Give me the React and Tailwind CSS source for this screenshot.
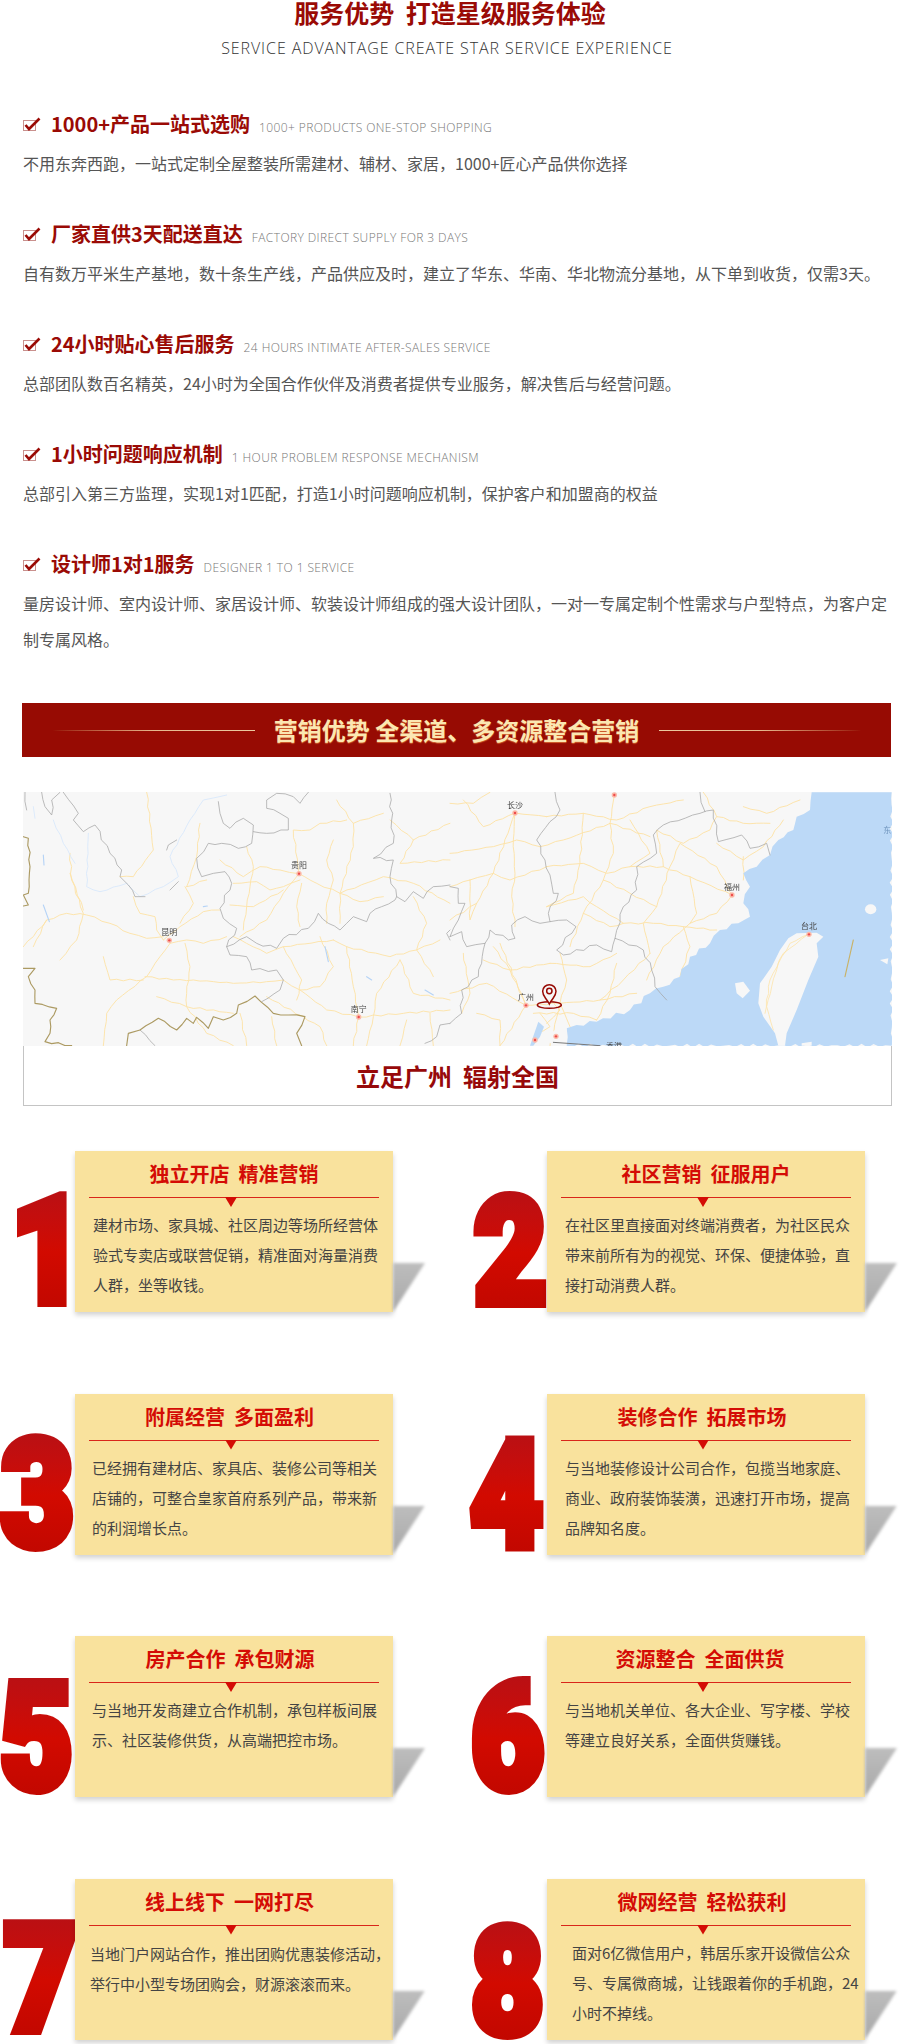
const features = [
  { title: '1000+产品一站式选购', en: '1000+ PRODUCTS ONE-STOP SHOPPING', text: '不用东奔西跑，一站式定制全屋整装所需建材、辅材、家居，1000+匠心产品供你选择' },
  { title: '厂家直供3天配送直达', en: 'FACTORY DIRECT SUPPLY FOR 3 DAYS', text: '自有数万平米生产基地，数十条生产线，产品供应及时，建立了华东、华南、华北物流分基地，从下单到收货，仅需3天。' },
  { title: '24小时贴心售后服务', en: '24 HOURS INTIMATE AFTER-SALES SERVICE', text: '总部团队数百名精英，24小时为全国合作伙伴及消费者提供专业服务，解决售后与经营问题。' },
  { title: '1小时问题响应机制', en: '1 HOUR PROBLEM RESPONSE MECHANISM', text: '总部引入第三方监理，实现1对1匹配，打造1小时问题响应机制，保护客户和加盟商的权益' },
  { title: '设计师1对1服务', en: 'DESIGNER 1 TO 1 SERVICE', text: '量房设计师、室内设计师、家居设计师、软装设计师组成的强大设计团队，一对一专属定制个性需求与户型特点，为客户定制专属风格。' },
];

const cards = [
  { n: '1', title: '独立开店\u00a0\u00a0精准营销', titleCls: 'pr-0', bodyCls: 'pl-[18px]', numCls: '-mr-[16px] -mb-[6px]', lines: ['建材市场、家具城、社区周边等场所经营体', '验式专卖店或联营促销，精准面对海量消费', '人群，坐等收钱。'] },
  { n: '2', title: '社区营销\u00a0\u00a0征服用户', titleCls: 'pr-0', bodyCls: 'pl-[18px]', numCls: '-mr-[7px] -mb-[7px]', lines: ['在社区里直接面对终端消费者，为社区民众', '带来前所有为的视觉、环保、便捷体验，直', '接打动消费人群。'] },
  { n: '3', title: '附属经营\u00a0\u00a0多面盈利', titleCls: 'pr-[9px]', bodyCls: 'pl-[17px]', numCls: '-mr-[6px] -mb-[7px]', lines: ['已经拥有建材店、家具店、装修公司等相关', '店铺的，可整合皇家首府系列产品，带来新', '的利润增长点。'] },
  { n: '4', title: '装修合作\u00a0\u00a0拓展市场', titleCls: 'pr-[8px]', bodyCls: 'pl-[18px]', numCls: '-mr-[3px] -mb-[7px]', lines: ['与当地装修设计公司合作，包揽当地家庭、', '商业、政府装饰装潢，迅速打开市场，提高', '品牌知名度。'] },
  { n: '5', title: '房产合作\u00a0\u00a0承包财源', titleCls: 'pr-[8px]', bodyCls: 'pl-[17px]', numCls: '-mr-[5px] -mb-[8px]', lines: ['与当地开发商建立合作机制，承包样板间展', '示、社区装修供货，从高端把控市场。'] },
  { n: '6', title: '资源整合\u00a0\u00a0全面供货', titleCls: 'pr-[12px]', bodyCls: 'pl-[18px]', numCls: '-mr-[4px] -mb-[8px]', lines: ['与当地机关单位、各大企业、写字楼、学校', '等建立良好关系，全面供货赚钱。'] },
  { n: '7', title: '线上线下\u00a0\u00a0一网打尽', titleCls: 'pr-[9px]', bodyCls: 'pl-[15px] pt-[1px]', numCls: '-mr-[9px] -mb-[6px]', lines: ['当地门户网站合作，推出团购优惠装修活动，', '举行中小型专场团购会，财源滚滚而来。'] },
  { n: '8', title: '微网经营\u00a0\u00a0轻松获利', titleCls: 'pr-[8px]', bodyCls: 'pl-[25px]', numCls: '-mr-[4px] -mb-[10px]', lines: ['面对6亿微信用户，韩居乐家开设微信公众', '号、专属微商城，让钱跟着你的手机跑，24', '小时不掉线。'] },
];

const grayLeft = [
  '125,37 135,80 155,105 155,60 180,37',
  '190,37 235,100 220,120 250,155 285,135 330,220 365,270 360,290 385,315 405,350 435,350',
  '535,305 510,330',
  '530,180 505,195 500,210',
  '655,65 660,100 670,130 690,145 730,115 760,135 755,190 715,205 665,190 625,190 590,235 605,290 640,280 675,275 695,310 660,385 670,415 710,445 680,500 690,525 740,530 755,570 830,570 850,600 840,630 785,665',
  '760,155 800,160 865,150 865,115 840,100 800,85 800,60 830,40 880,50 900,70 925,37',
  '680,500 740,470 770,490 830,505 850,475 925,445 955,400 985,430 1020,450 1060,410 1100,425 1110,400 1145,380 1185,360 1190,350 1170,290 1180,240 1120,235 1180,190 1175,120 1170,40',
  '1190,350 1215,365 1240,335 1270,355 1300,320 1350,315',
  '1350,450 1340,460 1350,480',
  '1350,730 1320,735 1310,770 1275,790',
  '75,37 80,90',
  '420,750 465,797',
];

const oliveLeft = [
  '70,170 85,175 90,260 85,340 70,345 85,375 70,378',
  '70,565 105,565 85,590 105,630 105,670 170,685 150,720 150,760 135,785 215,797',
  '380,797 385,760 420,750 475,715 530,750 560,715 580,730 590,712 625,745 640,710 670,720 710,700 715,675 765,648 820,700 865,705 915,710 890,760 905,797',
];

const roadsLeft = [
  '70,500 100,470 140,420 200,400 260,405 330,430 390,460 440,475 490,470',
  '400,350 420,400 465,410 470,450 490,480',
  '490,480 540,440 610,395 660,390',
  '510,490 560,480 610,490 680,470',
  '510,490 480,530 440,590 350,660 320,700 310,797',
  '555,490 570,560 560,640 560,680 620,760 700,797',
  '435,590 520,600 580,600 700,610 800,605 850,600',
  '210,280 250,390',
  '440,37 460,210 400,290 360,290',
  '600,130 590,230 560,320',
  '555,320 580,370 540,430',
  '660,240 730,290 780,260 840,270 897,281 950,310 1020,340 1080,365 1150,350',
  '897,281 880,150 930,150 960,130 1040,120',
  '897,281 850,340 800,420 720,470',
  '690,375 760,380 850,330',
  '905,310 890,380 900,440',
  '740,200 760,260 740,380 730,450',
  '1000,180 980,240 1000,300 980,370 980,430',
  '1060,130 1060,200 1020,340 1020,430',
  '1040,500 1060,620 1076,711 1060,797',
  '1076,711 1210,700 1350,690',
  '1076,711 980,690 900,630 850,600',
  '800,650 960,740 980,797',
  '1000,480 1040,500 1170,530 1250,510 1320,480',
  '1200,540 1130,640 1120,710 1100,797',
  '1200,540 1240,640 1350,660',
  '1170,120 1240,180 1350,130',
  '1240,180 1200,250 1350,240',
  '700,310 770,305 810,330 850,320 900,300',
  '1010,60 1060,130 1150,100',
  '1020,340 1150,290 1240,310 1350,370',
  '1240,350 1280,430 1250,510 1300,590',
  '960,470 1000,560 960,620 900,630',
  '850,500 905,600 890,660',
  '700,470 800,520 850,500 1000,480',
  '210,220 215,300 250,400 230,480 180,540',
  '310,530 330,600 430,600',
  '470,650 560,680 700,700',
  '720,700 740,797',
  '815,710 830,797',
  '1220,720 1200,797',
  '1290,700 1300,797',
  '140,420 100,500',
  '620,300 560,320',
];

const grayRight = [
  '315,37 330,90 300,125 260,180 285,240 300,285 310,340 325,340 295,400 300,425 350,420 378,440 320,510 340,525 440,495 485,515 495,475 580,510 605,570 615,620 650,660',
  '300,425 270,430 225,410 185,435 195,475 175,480 120,450 105,490 50,500 35,455 0,470',
  '0,320 25,325 25,370 45,370 25,420 0,470',
  '105,490 85,590 35,630 35,700 0,730',
  '495,475 520,380 560,330 560,260 620,220 610,165 640,135 750,100 790,90 805,185 875,165 900,205 950,190 960,225',
  '750,37 765,95',
];

const roadsRight = [
  '195,99 190,180 195,280 185,350 195,440',
  '40,60 100,140 195,99 290,110',
  '0,220 130,200 200,180 270,200',
  '0,70 70,70 120,37',
  '195,99 130,280 80,370 0,420',
  '290,260 400,250 470,280 540,260 640,260 720,290 846,345',
  '493,45 480,130 490,220 460,300 400,400 360,500',
  '290,380 400,350 440,380 520,430 610,430 700,440 800,450',
  '846,345 800,400 720,430 640,500 590,600',
  '846,345 800,260 690,190 660,260 620,380 580,430 600,520',
  '150,490 228,676 330,670 450,660 560,640',
  '228,676 180,570 130,500',
  '0,640 110,610 228,676',
  '228,676 150,797',
  '300,550 420,560 500,520',
  '330,670 300,797',
  '330,670 360,740',
  '250,700 370,700 440,720',
  '500,550 480,640 440,720',
  '700,440 720,500 690,590',
  '880,230 880,300',
  '1000,120 940,200 880,240 800,190',
  '880,80 950,100 1050,60',
  '760,37 800,110 880,130 960,130',
  '290,110 400,100 500,120 600,80 700,60',
  '270,200 340,180 480,130 600,170',
  '400,100 390,250 370,340 290,380',
  '540,120 600,220 540,260',
  '640,260 620,150 700,190 780,150 800,110',
  '60,300 130,280 180,300 290,260',
  '60,300 60,420 80,370',
  '0,320 60,300',
  '460,300 540,340 620,380',
  '720,290 740,400 720,430',
  '400,400 480,440 520,430',
  '100,540 180,570 300,550',
  '330,520 350,600 330,670',
  '40,520 60,640 35,700',
  '80,700 150,720 150,797',
  '450,660 520,600 600,520',
  '270,700 300,740 260,760',
  '290,640 330,690 290,730',
];

const citiesLeft = [
  { name: '贵阳', x: 897, y: 281 },
  { name: '昆明', x: 508, y: 481 },
  { name: '南宁', x: 1076, y: 711 },
];

const citiesRight = [
  { name: '长沙', x: 195, y: 99 },
  { name: '福州', x: 846, y: 345 },
  { name: '台北', x: 1077, y: 463 },
  { name: '广州', x: 228, y: 676 },
  { name: '', x: 493, y: 45 },
  { name: '', x: 255, y: 780 },
  { name: '', x: 318, y: 769 },
];

// break long segments up so borders and coast look hand-drawn rather than straight
const wiggle = (pts, amp, step = 20) => {
  const nums = pts.trim().split(/\s+/).map((p) => p.split(',').map(Number));
  const out = [];
  nums.forEach(([x, y], i) => {
    out.push(`${x},${y}`);
    const next = nums[i + 1];
    if (!next) return;
    const dx = next[0] - x;
    const dy = next[1] - y;
    const len = Math.hypot(dx, dy);
    const count = Math.floor(len / step);
    for (let k = 1; k < count; k++) {
      const t = k / count;
      const off = Math.sin((x + y) * 12.9 + k * 78.2) * amp;
      out.push(`${(x + dx * t - (dy / len) * off).toFixed(1)},${(y + dy * t + (dx / len) * off).toFixed(1)}`);
    }
  });
  return out.join(' ');
};

const City = ({ name, x, y }) => (
  <g>
    <circle cx={x} cy={y} r="8" fill="#fbb9a8" />
    <circle cx={x} cy={y} r="3.5" fill="#ee4b4b" />
    {name && (
      <text x={x} y={y - 16} fontSize="24" textAnchor="middle" fill="#444" fontFamily="'Noto Sans CJK SC', sans-serif">
        {name}
      </text>
    )}
  </g>
);

const Lines = ({ items, color, width, amp = 0 }) => (
  <g fill="none" stroke={color} strokeWidth={width} strokeLinejoin="round" strokeLinecap="round">
    {items.map((pts) => (
      <polyline key={pts} points={amp ? wiggle(pts, amp) : pts} />
    ))}
  </g>
);

const MapArt = () => (
  <svg viewBox="0 0 869 254" className="block w-[869px] h-[254px] blur-[0.3px]">
    <rect width="869" height="254" fill="#f7f7f7" />
    <g transform="translate(-23,-12) scale(0.33333)">
      <Lines items={roadsLeft} color="#fde3a8" width="2.8" amp={2.5} />
      <Lines items={['160,120 190,190 225,250', '265,160 260,320 300,335 380,310 420,350 490,320 535,290 510,230 570,120 610,60 680,45', '100,80 105,115']} color="#d8e8fb" width="2.6" amp={2} />
      <Lines items={['130,375 148,425', '130,225 132,255', '975,500 985,545', '610,380 622,378', '1275,630 1300,645', '1100,590 1115,600']} color="#b5d3f6" width="3.4" />
      <Lines items={grayLeft} color="#a3a3a3" width="2.2" amp={4.5} />
      <Lines items={oliveLeft} color="#ac9a62" width="3.4" amp={3} />
      {citiesLeft.map((c) => (
        <City key={c.name} {...c} />
      ))}
    </g>
    <g transform="translate(427,-12) scale(0.33333)">
      <Lines items={roadsRight} color="#fde2a6" width="2.8" amp={2.5} />
      <polygon
        fill="#bcd9f7"
        points={wiggle('1085,37 1080,90 1040,110 1030,150 985,180 960,225 920,260 880,280 900,320 880,370 900,410 865,430 810,450 780,490 720,530 690,590 640,620 600,640 540,690 440,725 380,735 350,745 350,797 1325,797 1325,37', 6, 18)}
      />
      <polygon fill="#bcd9f7" points="265,725 282,740 270,770 250,797 240,797" />
      <polygon
        fill="#f7f7f7"
        points="1040,460 1100,458 1120,470 1100,490 1105,530 1075,600 1040,690 1010,760 1005,797 985,797 975,760 940,710 925,670 930,610 965,560 990,510 1015,475"
      />
      <ellipse cx="1262" cy="388" rx="17" ry="15" fill="#f7f7f7" />
      <polygon fill="#f7f7f7" points="855,610 880,605 900,632 878,655 860,640" />
      <polygon fill="#f7f7f7" points="1290,540 1315,535 1312,553" />
      <polygon fill="#f7f7f7" points="1055,790 1085,785 1085,797 1055,797" />
      <polygon fill="#f7f7f7" points="320,745 350,745 350,785 300,790 288,775" />
      <Lines items={['1075,463 1020,490 985,550 965,620 950,680 970,750', '1075,463 1000,520 960,600 945,700']} color="#fce3a9" width="2.4" amp={2} />
      <Lines items={['1210,480 1185,590']} color="#c9b266" width="3.4" />
      <Lines items={grayRight} color="#a3a3a3" width="2.2" amp={4.5} />
      <Lines items={['310,787 450,797']} color="#777" width="3" />
      {citiesRight.map((c) => (
        <City key={`${c.x}`} {...c} />
      ))}
      <text x="1312" y="158" fontSize="24" textAnchor="middle" fill="#6f94bd" fontFamily="'Noto Sans CJK SC', sans-serif">东</text>
      <text x="492" y="806" fontSize="24" textAnchor="middle" fill="#444" fontFamily="'Noto Sans CJK SC', sans-serif">香港</text>
      <g fill="none" stroke="#970a05" strokeWidth="4.5">
        <ellipse cx="298" cy="675" rx="36" ry="10" />
        <path d="M298 672 C288 652 278 650 278 634 a20 20 0 0 1 40 0 C318 650 308 652 298 672 Z" fill="#f7f7f7" />
        <circle cx="298" cy="633" r="8" />
      </g>
    </g>
  </svg>
);

const CheckIcon = () => (
  <svg viewBox="0 0 18 14" className="w-[18px] h-[14px] shrink-0">
    <rect x="0.5" y="3.5" width="12" height="10" fill="none" stroke="#c9908d" strokeWidth="1" />
    <path d="M2.5 8 L6 12 L16.5 1.5" fill="none" stroke="#9a0a05" strokeWidth="2.6" />
  </svg>
);

const Card = ({ card }) => (
  <div className="relative w-[318px] h-[161px] shrink-0 bg-[#f9e29d] shadow-[0_3px_5px_rgba(0,0,0,0.18)]">
    {/* cast shadow on the right */}
    <div className="absolute left-full bottom-0 blur-[1.5px]">
      <div className="w-[32px] h-[49px] bg-gradient-to-b from-[#bdbdbd] to-[#a8a8a8] [clip-path:polygon(0_0,100%_0,0_100%)]" />
    </div>
    <div className={`h-[46px] flex items-center justify-center text-[20px] font-bold text-[#d40c05] ${card.titleCls}`}>
      {card.title}
    </div>
    <div className="relative mx-[14px] h-[1px] bg-[#d9261a]">
      <div className="absolute left-[136px] top-0 w-[12px] h-[10px] bg-[#d40c05] [clip-path:polygon(0_0,100%_0,50%_100%)]" />
    </div>
    <div className={`mt-[12px] text-[15px] leading-[30px] text-[#444] ${card.bodyCls}`}>
      {card.lines.map((line) => (
        <div key={line} className="whitespace-nowrap">{line}</div>
      ))}
    </div>
  </div>
);

const BigNumber = ({ n, className }) => (
  <span
    className={`inline-block origin-right scale-x-[0.85] px-[8px] py-[6px] text-[148px] leading-[120px] font-black text-transparent bg-clip-text bg-gradient-to-b from-[#b81014] via-[#d20a00] to-[#bf0700] [-webkit-text-stroke:10px_transparent] font-['Roboto',sans-serif] ${className}`}
  >
    {n}
  </span>
);

export default function App() {
  return (
    <div className="relative w-[900px] h-[2044px] overflow-hidden bg-white font-['Noto_Sans_CJK_SC',sans-serif]">
      {/* Header */}
      <h1 className="text-center text-[25px] leading-6 font-bold text-[#9a0a05]">服务优势&nbsp;&nbsp;打造星级服务体验</h1>
      <p className="mt-[14px] pr-[6px] text-center text-[16px] leading-5 tracking-[0.9px] text-[#333] font-['Open_Sans',sans-serif] font-light">
        SERVICE ADVANTAGE CREATE STAR SERVICE EXPERIENCE
      </p>

      {/* Features */}
      <div className="mt-[52px] pl-[23px] pr-[7px]">
        {features.map((f) => (
          <div key={f.en} className="mb-[39px]">
            <div className="flex items-center h-7">
              <CheckIcon />
              <div className="ml-[10px] flex items-baseline">
                <span className="text-[20px] font-bold text-[#9a0a05] leading-7">{f.title}</span>
                <span className="ml-[9px] text-[12px] tracking-[0.4px] text-[#777] font-['Open_Sans',sans-serif] font-light">{f.en}</span>
              </div>
            </div>
            <p className="mt-[7px] text-[16px] leading-9 text-[#555]">{f.text}</p>
          </div>
        ))}
      </div>

      {/* Banner */}
      <div className="ml-[22px] mt-[46px] w-[869px] h-[54px] bg-[#970b03] flex items-center justify-center gap-[18px]">
        <div className="w-[202px] h-[1px] bg-gradient-to-r from-[#970b03] via-[#e6b98e] to-[#eccaa0]" />
        <span className="w-[368px] text-center text-[24px] font-bold leading-none whitespace-nowrap text-[#fbe7b2] [text-shadow:0_1px_1px_#d2622f]">
          营销优势 全渠道、多资源整合营销
        </span>
        <div className="w-[202px] h-[1px] bg-gradient-to-l from-[#970b03] via-[#e6b98e] to-[#eccaa0]" />
      </div>

      {/* Map */}
      <div className="ml-[23px] mt-[35px] w-[869px]">
        <MapArt />
        <div className="h-[60px] border border-t-0 border-[#c4c4c4] flex items-center justify-center text-[24px] font-bold text-[#97090a]">
          立足广州&nbsp;&nbsp;辐射全国
        </div>
      </div>

      {/* Cards */}
      <div className="mt-[45px] grid grid-cols-[450px_450px] gap-y-[81.5px]">
        {cards.map((card, i) => (
          <div key={card.n} className="flex items-end">
            <div className={`flex justify-end items-end shrink-0 ${i % 2 === 0 ? 'w-[75px]' : 'w-[97px]'}`}>
              <BigNumber n={card.n} className={card.numCls} />
            </div>
            <Card card={card} />
          </div>
        ))}
      </div>
    </div>
  );
}
